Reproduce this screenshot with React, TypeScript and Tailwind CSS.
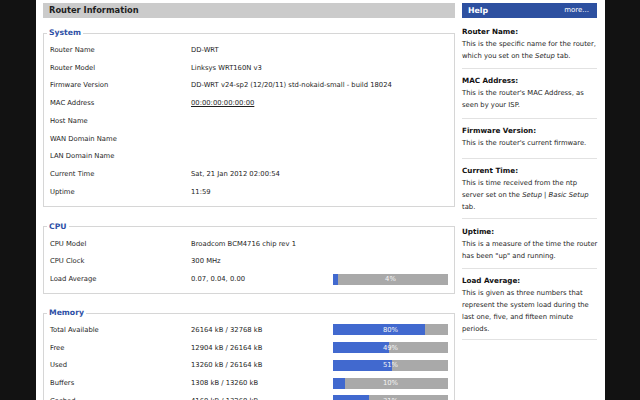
import React from "react";

type Row = { label: string; value?: React.ReactNode; pct?: number };

const systemRows: Row[] = [
  { label: "Router Name", value: "DD-WRT" },
  { label: "Router Model", value: "Linksys WRT160N v3" },
  { label: "Firmware Version", value: "DD-WRT v24-sp2 (12/20/11) std-nokaid-small - build 18024" },
  { label: "MAC Address", value: <span className="underline">00:00:00:00:00:00</span> },
  { label: "Host Name" },
  { label: "WAN Domain Name" },
  { label: "LAN Domain Name" },
  { label: "Current Time", value: "Sat, 21 Jan 2012 02:00:54" },
  { label: "Uptime", value: "11:59" },
];

const cpuRows: Row[] = [
  { label: "CPU Model", value: "Broadcom BCM4716 chip rev 1" },
  { label: "CPU Clock", value: "300 MHz" },
  { label: "Load Average", value: "0.07, 0.04, 0.00", pct: 4 },
];

const memRows: Row[] = [
  { label: "Total Available", value: "26164 kB / 32768 kB", pct: 80 },
  { label: "Free", value: "12904 kB / 26164 kB", pct: 49 },
  { label: "Used", value: "13260 kB / 26164 kB", pct: 51 },
  { label: "Buffers", value: "1308 kB / 13260 kB", pct: 10 },
  { label: "Cached", value: "4160 kB / 13260 kB", pct: 31 },
];

type HelpItem = { title: string; lines: React.ReactNode[]; pt: string; pb: string };

const helpItems: HelpItem[] = [
  {
    title: "Router Name:",
    lines: ["This is the specific name for the router,", <>which you set on the <i>Setup</i> tab.</>],
    pt: "pt-[8px]",
    pb: "pb-[6px]",
  },
  {
    title: "MAC Address:",
    lines: ["This is the router's MAC Address, as", "seen by your ISP."],
    pt: "pt-[6px]",
    pb: "pb-[7px]",
  },
  {
    title: "Firmware Version:",
    lines: ["This is the router's current firmware."],
    pt: "pt-[6px]",
    pb: "pb-[9px]",
  },
  {
    title: "Current Time:",
    lines: [
      "This is time received from the ntp",
      <>server set on the <i>Setup | Basic Setup</i></>,
      "tab.",
    ],
    pt: "pt-[6px]",
    pb: "pb-[5px]",
  },
  {
    title: "Uptime:",
    lines: ["This is a measure of the time the router", 'has been "up" and running.'],
    pt: "pt-[7px]",
    pb: "pb-[6px]",
  },
  {
    title: "Load Average:",
    lines: [
      "This is given as three numbers that",
      "represent the system load during the",
      "last one, five, and fifteen minute",
      "periods.",
    ],
    pt: "pt-[6px]",
    pb: "pb-[4px]",
  },
];

function Bar({ pct }: { pct: number }) {
  return (
    <div className="relative mr-[3px] h-[11px] w-[115px] shrink-0 bg-[#a9a9a9]">
      <div className="h-full bg-[#4169cf]" style={{ width: `${pct}%` }} />
      <span className="absolute inset-0 flex items-center justify-center text-[#f4f4f4]">{pct}%</span>
    </div>
  );
}

function Section({ title, rows, className }: { title: string; rows: Row[]; className: string }) {
  return (
    <fieldset className={`border border-[#d6d6d6] px-[3px] pt-[1px] pb-[5px] ${className}`}>
      <legend className="px-[2px] text-[7.7px] font-bold leading-[14px] text-[#2d4fa6]">{title}</legend>
      {rows.map((r) => (
        <div key={r.label} className="flex h-[17.75px] items-center pl-[3px]">
          <div className="w-[141px] shrink-0 whitespace-nowrap">{r.label}</div>
          <div className="flex-1 whitespace-nowrap">{r.value}</div>
          {r.pct !== undefined && <Bar pct={r.pct} />}
        </div>
      ))}
    </fieldset>
  );
}

export default function App() {
  return (
    <div className="flex h-[400px] w-[640px] overflow-hidden bg-[#121212] font-['DejaVu_Sans',sans-serif] text-[6.8px] text-[#1e1e1e]">
      <div className="w-[36px] shrink-0" />
      <div className="flex w-[569px] shrink-0 gap-[7px] bg-white pl-[7px] pt-[3px]">
        <div className="w-[412px] shrink-0">
          <div className="flex h-[15px] items-center bg-[#cbcbcb] pl-[6px] text-[8.3px] font-bold text-[#1e1e1e]">
            Router Information
          </div>
          <Section title="System" rows={systemRows} className="mt-[8px]" />
          <Section title="CPU" rows={cpuRows} className="mt-[13px]" />
          <Section title="Memory" rows={memRows} className="mt-[12px]" />
        </div>
        <div className="w-[135px] shrink-0">
          <div className="flex h-[15px] items-center justify-between bg-[#2d50a0] pl-[6px] pr-[8px] text-white">
            <span className="text-[7.8px] font-bold">Help</span>
            <span className="text-[7px]">more...</span>
          </div>
          {helpItems.map((h) => (
            <div key={h.title} className={`border-b border-[#e2e2e2] ${h.pt} ${h.pb}`}>
              <div className="text-[7.2px] font-bold leading-[12px] text-[#111]">{h.title}</div>
              {h.lines.map((l, i) => (
                <div key={i} className="whitespace-nowrap leading-[12px]">
                  {l}
                </div>
              ))}
            </div>
          ))}
        </div>
      </div>
    </div>
  );
}
